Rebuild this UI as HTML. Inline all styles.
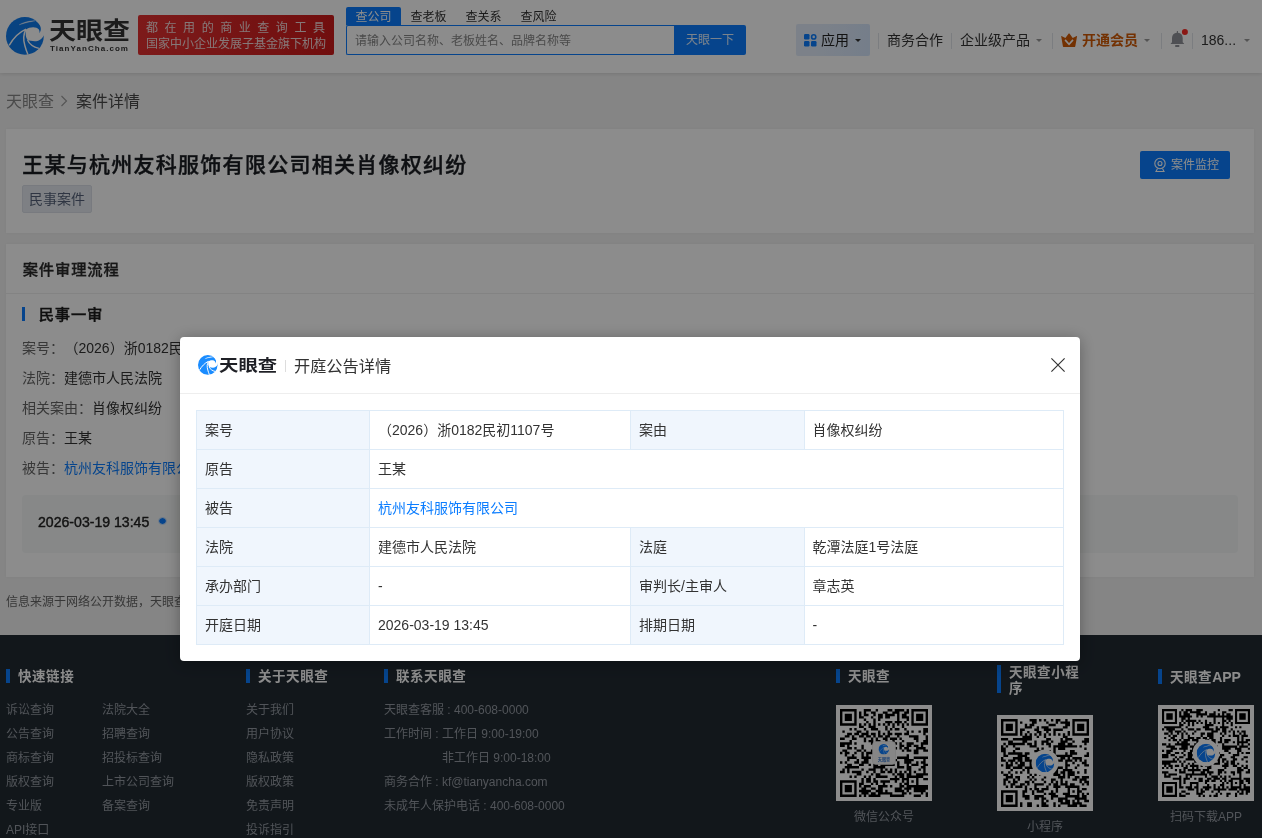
<!DOCTYPE html>
<html lang="zh-CN">
<head>
<meta charset="utf-8">
<title>案件详情 - 天眼查</title>
<style>
*{box-sizing:border-box;margin:0;padding:0}
html,body{width:1262px;height:838px;overflow:hidden}
body{font-family:"Liberation Sans","Noto Sans CJK SC",sans-serif;font-size:14px;color:#333;background:#f3f3f3;position:relative}
a{text-decoration:none;color:inherit}
.abs{position:absolute}
#pg{position:absolute;left:0;top:0;width:1262px;height:838px;overflow:hidden;will-change:transform}
/* header */
#hd{position:absolute;left:0;top:0;width:1262px;height:73px;background:#fff;box-shadow:0 1px 4px rgba(0,0,0,.12)}
#logo-ic{position:absolute;left:6.2px;top:17px;width:37.8px;height:37.8px}
#logo-t{position:absolute;left:49px;top:13px;font-size:24px;line-height:36px;font-weight:700;color:#333;letter-spacing:0;transform-origin:0 50%;transform:scaleX(1.125);white-space:nowrap}
#logo-s{position:absolute;left:50px;top:44px;font-size:8px;line-height:10px;font-weight:700;color:#333;letter-spacing:1.05px;white-space:nowrap}
#badge{position:absolute;left:138px;top:15px;width:196px;height:40px;background:linear-gradient(90deg,#e33131,#cd1b1b);border-radius:2px;color:#f3dada;font-size:12px;line-height:16px;padding:5px 0 0 8px;white-space:nowrap}
#badge .l1{letter-spacing:6.55px}
#badge .l2{letter-spacing:0}
#tabs{position:absolute;left:346px;top:7px;height:18px;font-size:12px;line-height:18px;color:#333;white-space:nowrap}
#tabs span{display:inline-block;height:18px;padding:1px 9.5px 0;line-height:18px;vertical-align:top}
#tabs span.on{background:#0b7dff;color:#fff;border-radius:2px 2px 0 0}
#sin{position:absolute;left:346px;top:25px;width:329px;height:30px;border:1px solid #0b7dff;border-right:0;border-radius:2px 0 0 2px;background:#fff;font-size:12px;line-height:30px;color:#888;padding-left:8px;white-space:nowrap}
#sbtn{position:absolute;left:674px;top:25px;width:72px;height:30px;background:#0b7dff;color:rgba(255,255,255,.88);font-size:12px;line-height:30px;text-align:center;border-radius:0 2px 2px 0}
.nav{position:absolute;top:24px;height:32px;line-height:32px;font-size:14px;color:#333;white-space:nowrap}
.caret{display:inline-block;width:0;height:0;border-left:3.5px solid transparent;border-right:3.5px solid transparent;border-top:3.5px solid #999;vertical-align:middle;margin-left:6px;position:relative;top:-1px}
.vsep{position:absolute;top:33px;width:1px;height:16px;background:#e1e4ea}
/* breadcrumb */
#bc{position:absolute;left:6px;top:90px;font-size:16px;line-height:24px;color:#888;white-space:nowrap}
#bc b{font-weight:400;color:#4a4a4a}
.card{position:absolute;left:6px;width:1248px;background:#fff;box-shadow:0 0 3px rgba(0,0,0,.06)}
#c1{top:129px;height:104px}
#c2{top:244px;height:333px}
#ttl{position:absolute;left:16.2px;top:20.4px;font-size:21px;letter-spacing:1.27px;line-height:32px;font-weight:500;-webkit-text-stroke:.4px #1a1d22;color:#1a1d22;white-space:nowrap}
#tag{position:absolute;left:16px;top:56px;width:70px;height:28px;background:#e6eaf0;border:1px solid #dadfe7;border-radius:2px;font-size:14px;line-height:26px;text-align:center;color:#56627a}
#mon{position:absolute;left:1134px;top:22px;width:90px;height:28px;background:#0b7dff;border-radius:2px;color:#fff;font-size:12px;line-height:28px;white-space:nowrap}
#mon svg{position:absolute;left:12px;top:6px}
#mon span{position:absolute;left:31px;top:0}
#c2 h3{position:absolute;left:16.7px;top:14px;font-size:15.3px;letter-spacing:.85px;line-height:24px;font-weight:500;-webkit-text-stroke:.3px #2a2a2a;color:#2a2a2a;white-space:nowrap}
#c2 .dv{position:absolute;left:0;top:49px;width:1248px;height:1px;background:#eee}
#c2 .bar{position:absolute;left:16px;top:63px;width:3px;height:14px;background:#0b7dff}
#c2 h4{position:absolute;left:32.7px;top:59px;font-size:15.3px;letter-spacing:.8px;line-height:24px;font-weight:500;-webkit-text-stroke:.4px #1c1c1c;color:#1c1c1c;white-space:nowrap}
.ln{position:absolute;left:16px;font-size:14px;line-height:22px;color:#666;white-space:nowrap}
.ln b{font-weight:400;color:#333}
.ln a{color:#0b7dff}
#tl{position:absolute;left:16px;top:251px;width:1216px;height:58px;background:#f6f8f7;border-radius:4px}
#tl span{position:absolute;left:16px;top:17px;font-size:14.1px;line-height:20px;color:#222;-webkit-text-stroke:.4px #222;white-space:nowrap}
#tl i{position:absolute;left:136px;top:21.5px;width:8.6px;height:8.6px;border-radius:50%;background:#0b7dff;border:1px solid #c4dcfa;background-clip:padding-box}
#src{position:absolute;left:6px;top:593px;font-size:12px;line-height:18px;color:#666;white-space:nowrap}
/* footer */
#ft{position:absolute;left:0;top:635px;width:1262px;height:203px;background:#212a32;color:#949aa2;font-size:12px}
#ft h5{position:absolute;font-size:13.5px;letter-spacing:.55px;line-height:14px;font-weight:700;color:#fff;white-space:nowrap;padding-left:12px}
#ft h5:before{content:"";position:absolute;left:0;top:-1px;width:4px;height:100%;background:#0b7dff}
#ft .c{position:absolute;line-height:24px;white-space:nowrap}
#ft .c div{height:24px}
.qr{position:absolute;width:96px;height:96px;background:#fff}
.qr svg{position:absolute;left:0;top:0}
.qrl{position:absolute;width:96px;text-align:center;font-size:12px;line-height:16px;color:#949aa2;white-space:nowrap}
#ft h5.two:before{top:0;height:28px}
#ft>*{margin-top:-1px}
/* mask + modal */
#mask{position:absolute;left:0;top:0;width:1262px;height:838px;background:rgba(0,0,0,.45)}
#md{position:absolute;left:180px;top:337px;width:900px;height:324px;background:#fff;border-radius:4px;box-shadow:0 2px 16px rgba(0,0,0,.32)}
#mh{position:absolute;left:0;top:0;width:900px;height:57px;border-bottom:1px solid #eee}
#mh .ic{position:absolute;left:18px;top:18px}
#mh .lt{position:absolute;left:38.8px;top:14.5px;font-size:15.5px;line-height:28px;font-weight:700;color:#1f2026;transform-origin:0 50%;transform:scaleX(1.25);white-space:nowrap}
#mh .sp{position:absolute;left:105px;top:23px;width:1px;height:12px;background:#ddd}
#mh .tt{position:absolute;left:114px;top:15px;font-size:16.2px;line-height:28px;color:#333;white-space:nowrap}
#mh .x{position:absolute;left:871px;top:21px}
#tb{position:absolute;left:16px;top:73px;width:867px;border-collapse:collapse;table-layout:fixed;font-size:14px;color:#333}
#tb td{height:39px;border:1px solid #deebf7;padding:0 8px;line-height:20px;white-space:nowrap;overflow:hidden}
#tb td.k{background:#f0f6fd}

#tb a{color:#0b7dff}
</style>
</head>
<body>
<div id="pg">
<div id="hd">
  <svg id="logo-ic" viewBox="0 0 100 100"><circle cx="50" cy="50" r="50" fill="#0f7aec"/><path d="M53,33 C62,26 80,24 87,33 C89,37 89,40 88,43 C93,37 94,28 88,20 C85,15 81,12 77,9 L101,5 L101,47 C96,58 86,64 76,64 C69,64 62,63 57,61 C52,54 51,44 53,33 Z" fill="#fff"/><path d="M8.5,75 C18,58 35,40 53,32 M53,32 C46,45 45,60 50,76 C52,84 55,92 58,99 M57,61 C62,72 74,80 87,83" stroke="#fff" stroke-width="3.8" fill="none"/><path d="M35,20.5 C48,13 62,10 77,10 C62,13 48,16.5 35,20.5 Z" fill="#fff" stroke="#fff" stroke-width=".8"/></svg>
  <div id="logo-t">天眼查</div>
  <div id="logo-s">TianYanCha.com</div>
  <div id="badge"><div class="l1">都在用的商业查询工具</div><div class="l2">国家中小企业发展子基金旗下机构</div></div>
  <div id="tabs"><span class="on">查公司</span><span>查老板</span><span>查关系</span><span>查风险</span></div>
  <div id="sin">请输入公司名称、老板姓名、品牌名称等</div>
  <div id="sbtn">天眼一下</div>
  <div class="abs" style="left:796px;top:24px;width:74px;height:32px;background:linear-gradient(100deg,#e2ecfa 30%,#d5e5fb);border-radius:2px"></div>
  <svg class="abs" style="left:804px;top:34px" width="13" height="13" viewBox="0 0 13 13"><rect x="0" y="0" width="5.5" height="5.5" rx="1.2" fill="#0b7dff"/><rect x="0" y="7" width="5.5" height="5.5" rx="1.2" fill="#0b7dff"/><rect x="7" y="7" width="5.5" height="5.5" rx="1.2" fill="#0b7dff"/><circle cx="9.7" cy="2.9" r="2.1" fill="none" stroke="#0b7dff" stroke-width="1.6"/></svg>
  <div class="nav" style="left:821px;color:#222">应用<span class="caret" style="border-top-color:#333"></span></div>
  <div class="vsep" style="left:878px"></div>
  <div class="nav" style="left:887px">商务合作</div>
  <div class="vsep" style="left:951px"></div>
  <div class="nav" style="left:960px">企业级产品<span class="caret"></span></div>
  <div class="vsep" style="left:1052px"></div>
  <svg class="abs" style="left:1060px;top:32px" width="19" height="17" viewBox="0 0 19 17"><path d="M1.2 4.3 C0.9 4.0 1.0 3.8 1.4 4.0 L5.4 5.9 L8.7 1.6 C8.95 1.3 9.2 1.3 9.45 1.6 L12.7 5.9 L16.7 4.0 C17.1 3.8 17.2 4.0 17.0 4.4 L15.3 14.2 C15.2 14.8 14.8 15.1 14.2 15.1 L4.0 15.1 C3.4 15.1 3.0 14.8 2.9 14.2 Z" fill="#d25a05"/><path d="M5.1 7.9 L9.05 12.4 L13 7.9" stroke="#fff" stroke-width="1.6" fill="none"/></svg>
  <div class="nav" style="left:1082px;color:#d25a05;font-weight:700">开通会员<span class="caret"></span></div>
  <div class="vsep" style="left:1161px"></div>
  <svg class="abs" style="left:1169px;top:28px" width="20" height="22" viewBox="0 0 20 22"><path d="M7.8 3.4 C7.8 2.9 9.0 2.9 9.0 3.4 L9.0 4.75 C11.8 5.0 13.7 6.9 13.7 10 L13.7 14.3 L15.0 15.5 C15.3 15.8 15.2 16.1 14.8 16.1 L2.0 16.1 C1.6 16.1 1.5 15.8 1.8 15.5 L3.0 14.3 L3.0 10 C3.0 6.9 5.0 5.0 7.8 4.75 Z" fill="#909399"/><rect x="6.2" y="17.1" width="4.1" height="1.8" rx=".5" fill="#909399"/><circle cx="15.9" cy="4" r="3" fill="#fb2b25"/></svg>
  <div class="vsep" style="left:1192px"></div>
  <div class="nav" style="left:1201px">186...<span class="caret" style="margin-left:8px"></span></div>
</div>

<div id="bc">天眼查 <svg width="8" height="12" viewBox="0 0 8 12" style="margin:0 3px 0 2px"><path d="M1.5 1 L6.5 6 L1.5 11" stroke="#999" stroke-width="1.1" fill="none"/></svg> <b>案件详情</b></div>

<div class="card" id="c1">
  <div id="ttl">王某与杭州友科服饰有限公司相关肖像权纠纷</div>
  <div id="tag">民事案件</div>
  <div id="mon"><svg width="16" height="16" viewBox="0 0 16 16" fill="none" stroke="#fff" stroke-width="1.1"><circle cx="8" cy="6.5" r="5.2"/><circle cx="8" cy="6.5" r="2"/><path d="M5.5 11.5 L4 14.5 L12 14.5 L10.5 11.5"/></svg><span>案件监控</span></div>
</div>

<div class="card" id="c2">
  <h3>案件审理流程</h3>
  <div class="dv"></div>
  <div class="bar"></div>
  <h4>民事一审</h4>
  <div class="ln" style="top:93px">案号：<b style="margin-left:7.5px">（2026）浙0182民初1107号</b></div>
  <div class="ln" style="top:123px">法院：<b>建德市人民法院</b></div>
  <div class="ln" style="top:153px">相关案由：<b>肖像权纠纷</b></div>
  <div class="ln" style="top:183px">原告：<b>王某</b></div>
  <div class="ln" style="top:213px">被告：<a>杭州友科服饰有限公司</a></div>
  <div id="tl"><span>2026-03-19 13:45</span><i></i></div>
</div>
<div id="src">信息来源于网络公开数据，天眼查仅作展示，不代表天眼查观点。</div>

<div id="ft">
  <h5 style="left:6px;top:36px">快速链接</h5>
  <div class="c" style="left:6px;top:64px"><div>诉讼查询</div><div>公告查询</div><div>商标查询</div><div>版权查询</div><div>专业版</div><div>API接口</div></div>
  <div class="c" style="left:102px;top:64px"><div>法院大全</div><div>招聘查询</div><div>招投标查询</div><div>上市公司查询</div><div>备案查询</div></div>
  <h5 style="left:246px;top:36px">关于天眼查</h5>
  <div class="c" style="left:246px;top:64px"><div>关于我们</div><div>用户协议</div><div>隐私政策</div><div>版权政策</div><div>免责声明</div><div>投诉指引</div></div>
  <h5 style="left:384px;top:36px">联系天眼查</h5>
  <div class="c" style="left:384px;top:64px"><div>天眼查客服 : 400-608-0000</div><div>工作时间 : 工作日 9:00-19:00</div><div style="padding-left:58px">非工作日 9:00-18:00</div><div>商务合作 : kf@tianyancha.com</div><div>未成年人保护电话 : 400-608-0000</div></div>
  <h5 style="left:836px;top:36px">天眼查</h5>
  <h5 class="two" style="left:997px;top:31px;width:92px;white-space:normal;line-height:16px">天眼查小程序</h5>
  <h5 style="left:1158px;top:36px">天眼查<span style="font-size:14px;letter-spacing:0">APP</span></h5>
  <div class="qr" style="left:836px;top:71px"><svg width="96" height="96" viewBox="0 0 96 96"><g transform="translate(4 4) scale(2.3784)"><path d="M0 0h7v1h-7zM10 0h3v1h-3zM15 0h1v1h-1zM20 0h2v1h-2zM23 0h4v1h-4zM28 0h1v1h-1zM30 0h7v1h-7zM0 1h1v1h-1zM6 1h1v1h-1zM8 1h1v1h-1zM10 1h1v1h-1zM13 1h2v1h-2zM18 1h2v1h-2zM22 1h3v1h-3zM27 1h2v1h-2zM30 1h1v1h-1zM36 1h1v1h-1zM0 2h1v1h-1zM2 2h3v1h-3zM6 2h1v1h-1zM8 2h1v1h-1zM10 2h2v1h-2zM14 2h1v1h-1zM16 2h2v1h-2zM19 2h4v1h-4zM24 2h1v1h-1zM26 2h2v1h-2zM30 2h1v1h-1zM32 2h3v1h-3zM36 2h1v1h-1zM0 3h1v1h-1zM2 3h3v1h-3zM6 3h1v1h-1zM8 3h2v1h-2zM13 3h1v1h-1zM16 3h2v1h-2zM19 3h2v1h-2zM24 3h1v1h-1zM26 3h3v1h-3zM30 3h1v1h-1zM32 3h3v1h-3zM36 3h1v1h-1zM0 4h1v1h-1zM2 4h3v1h-3zM6 4h1v1h-1zM10 4h1v1h-1zM14 4h1v1h-1zM16 4h1v1h-1zM24 4h1v1h-1zM28 4h1v1h-1zM30 4h1v1h-1zM32 4h3v1h-3zM36 4h1v1h-1zM0 5h1v1h-1zM6 5h1v1h-1zM11 5h1v1h-1zM14 5h1v1h-1zM19 5h3v1h-3zM23 5h3v1h-3zM27 5h1v1h-1zM30 5h1v1h-1zM36 5h1v1h-1zM0 6h7v1h-7zM8 6h1v1h-1zM10 6h1v1h-1zM12 6h1v1h-1zM14 6h1v1h-1zM16 6h1v1h-1zM18 6h1v1h-1zM20 6h1v1h-1zM22 6h1v1h-1zM24 6h1v1h-1zM26 6h1v1h-1zM28 6h1v1h-1zM30 6h7v1h-7zM8 7h2v1h-2zM12 7h3v1h-3zM19 7h1v1h-1zM22 7h1v1h-1zM26 7h1v1h-1zM4 8h1v1h-1zM6 8h1v1h-1zM10 8h1v1h-1zM13 8h3v1h-3zM19 8h1v1h-1zM21 8h1v1h-1zM23 8h2v1h-2zM27 8h1v1h-1zM35 8h2v1h-2zM1 9h1v1h-1zM7 9h2v1h-2zM11 9h1v1h-1zM16 9h1v1h-1zM20 9h1v1h-1zM28 9h1v1h-1zM30 9h1v1h-1zM33 9h1v1h-1zM35 9h2v1h-2zM3 10h2v1h-2zM6 10h2v1h-2zM9 10h3v1h-3zM13 10h2v1h-2zM16 10h1v1h-1zM18 10h1v1h-1zM20 10h2v1h-2zM23 10h3v1h-3zM27 10h2v1h-2zM35 10h1v1h-1zM2 11h2v1h-2zM5 11h1v1h-1zM8 11h2v1h-2zM11 11h2v1h-2zM14 11h1v1h-1zM16 11h2v1h-2zM19 11h2v1h-2zM24 11h1v1h-1zM29 11h4v1h-4zM36 11h1v1h-1zM0 12h2v1h-2zM5 12h2v1h-2zM10 12h1v1h-1zM13 12h1v1h-1zM15 12h1v1h-1zM18 12h2v1h-2zM21 12h3v1h-3zM25 12h1v1h-1zM31 12h2v1h-2zM36 12h1v1h-1zM4 13h1v1h-1zM10 13h1v1h-1zM12 13h2v1h-2zM15 13h2v1h-2zM19 13h1v1h-1zM22 13h1v1h-1zM26 13h1v1h-1zM32 13h1v1h-1zM35 13h2v1h-2zM0 14h5v1h-5zM6 14h1v1h-1zM13 14h1v1h-1zM16 14h1v1h-1zM18 14h1v1h-1zM20 14h1v1h-1zM23 14h1v1h-1zM25 14h1v1h-1zM28 14h3v1h-3zM34 14h3v1h-3zM0 15h2v1h-2zM3 15h1v1h-1zM9 15h1v1h-1zM14 15h1v1h-1zM22 15h1v1h-1zM25 15h2v1h-2zM28 15h2v1h-2zM31 15h2v1h-2zM34 15h1v1h-1zM3 16h2v1h-2zM6 16h1v1h-1zM9 16h1v1h-1zM15 16h3v1h-3zM20 16h4v1h-4zM25 16h1v1h-1zM27 16h2v1h-2zM32 16h4v1h-4zM1 17h2v1h-2zM7 17h2v1h-2zM10 17h1v1h-1zM13 17h1v1h-1zM17 17h3v1h-3zM21 17h2v1h-2zM26 17h1v1h-1zM28 17h2v1h-2zM31 17h2v1h-2zM35 17h2v1h-2zM0 18h1v1h-1zM2 18h2v1h-2zM6 18h1v1h-1zM9 18h1v1h-1zM11 18h3v1h-3zM16 18h7v1h-7zM31 18h2v1h-2zM2 19h1v1h-1zM5 19h1v1h-1zM9 19h1v1h-1zM11 19h1v1h-1zM14 19h2v1h-2zM19 19h3v1h-3zM28 19h1v1h-1zM3 20h4v1h-4zM9 20h4v1h-4zM14 20h3v1h-3zM19 20h3v1h-3zM24 20h5v1h-5zM31 20h6v1h-6zM3 21h1v1h-1zM7 21h1v1h-1zM10 21h2v1h-2zM14 21h1v1h-1zM20 21h2v1h-2zM23 21h1v1h-1zM27 21h4v1h-4zM35 21h1v1h-1zM0 22h1v1h-1zM2 22h1v1h-1zM6 22h2v1h-2zM9 22h3v1h-3zM15 22h1v1h-1zM17 22h3v1h-3zM21 22h1v1h-1zM24 22h1v1h-1zM27 22h3v1h-3zM32 22h1v1h-1zM34 22h2v1h-2zM3 23h2v1h-2zM8 23h2v1h-2zM12 23h1v1h-1zM14 23h2v1h-2zM17 23h6v1h-6zM24 23h1v1h-1zM28 23h1v1h-1zM30 23h3v1h-3zM35 23h2v1h-2zM2 24h6v1h-6zM14 24h5v1h-5zM24 24h3v1h-3zM28 24h2v1h-2zM34 24h2v1h-2zM1 25h1v1h-1zM3 25h1v1h-1zM9 25h1v1h-1zM12 25h3v1h-3zM17 25h1v1h-1zM19 25h1v1h-1zM21 25h1v1h-1zM23 25h1v1h-1zM28 25h2v1h-2zM33 25h1v1h-1zM35 25h1v1h-1zM0 26h2v1h-2zM3 26h1v1h-1zM5 26h4v1h-4zM11 26h1v1h-1zM14 26h1v1h-1zM17 26h2v1h-2zM20 26h2v1h-2zM23 26h1v1h-1zM25 26h1v1h-1zM27 26h1v1h-1zM29 26h1v1h-1zM31 26h1v1h-1zM35 26h1v1h-1zM7 27h2v1h-2zM13 27h1v1h-1zM15 27h2v1h-2zM22 27h1v1h-1zM24 27h3v1h-3zM28 27h2v1h-2zM32 27h5v1h-5zM4 28h1v1h-1zM6 28h1v1h-1zM10 28h1v1h-1zM12 28h1v1h-1zM15 28h5v1h-5zM23 28h1v1h-1zM25 28h2v1h-2zM28 28h7v1h-7zM9 29h1v1h-1zM11 29h2v1h-2zM14 29h1v1h-1zM21 29h4v1h-4zM26 29h3v1h-3zM32 29h1v1h-1zM35 29h2v1h-2zM0 30h7v1h-7zM9 30h1v1h-1zM11 30h2v1h-2zM14 30h2v1h-2zM17 30h4v1h-4zM23 30h1v1h-1zM26 30h1v1h-1zM28 30h1v1h-1zM30 30h1v1h-1zM32 30h1v1h-1zM0 31h1v1h-1zM6 31h1v1h-1zM8 31h2v1h-2zM13 31h1v1h-1zM15 31h1v1h-1zM18 31h1v1h-1zM25 31h1v1h-1zM27 31h2v1h-2zM32 31h1v1h-1zM0 32h1v1h-1zM2 32h3v1h-3zM6 32h1v1h-1zM8 32h1v1h-1zM10 32h3v1h-3zM16 32h4v1h-4zM21 32h1v1h-1zM25 32h2v1h-2zM28 32h9v1h-9zM0 33h1v1h-1zM2 33h3v1h-3zM6 33h1v1h-1zM9 33h2v1h-2zM13 33h2v1h-2zM16 33h2v1h-2zM23 33h3v1h-3zM27 33h3v1h-3zM31 33h6v1h-6zM0 34h1v1h-1zM2 34h3v1h-3zM6 34h1v1h-1zM8 34h5v1h-5zM15 34h3v1h-3zM19 34h1v1h-1zM23 34h4v1h-4zM28 34h1v1h-1zM31 34h5v1h-5zM0 35h1v1h-1zM6 35h1v1h-1zM9 35h3v1h-3zM13 35h2v1h-2zM16 35h6v1h-6zM26 35h2v1h-2zM29 35h1v1h-1zM34 35h1v1h-1zM36 35h1v1h-1zM0 36h7v1h-7zM8 36h1v1h-1zM10 36h1v1h-1zM12 36h5v1h-5zM21 36h6v1h-6zM31 36h3v1h-3zM36 36h1v1h-1z" fill="#000"/></g><rect x="36.5" y="36.5" width="23" height="23" rx="3.5" fill="#f4f4f4" stroke="#ddd" stroke-width=".6"/><svg x="42.5" y="39" width="10.5" height="10.5" viewBox="0 0 100 100"><circle cx="50" cy="50" r="50" fill="#0b7dff"/><path d="M53,33 C62,26 80,24 87,33 C89,37 89,40 88,43 C93,37 94,28 88,20 C85,15 81,12 77,9 L101,5 L101,47 C96,58 86,64 76,64 C69,64 62,63 57,61 C52,54 51,44 53,33 Z" fill="#fff"/><path d="M8.5,75 C18,58 35,40 53,32 M53,32 C46,45 45,60 50,76 C52,84 55,92 58,99 M57,61 C62,72 74,80 87,83" stroke="#fff" stroke-width="3.2" fill="none"/><path d="M35,19.5 C48,12 62,9 77,9.5 C62,11.5 48,14.5 35,19.5 Z" fill="#fff" stroke="#fff" stroke-width=".8"/></svg><text x="48" y="55.6" font-size="4.2" font-weight="700" text-anchor="middle" fill="#3a7bd0" font-family="'Liberation Sans','Noto Sans CJK SC',sans-serif">天眼查</text></svg></div>
  <div class="qr" style="left:997px;top:81px"><svg width="96" height="96" viewBox="0 0 96 96"><g transform="translate(4 4) scale(2.3784)"><path d="M0 0h7v1h-7zM12 0h3v1h-3zM16 0h1v1h-1zM18 0h1v1h-1zM21 0h1v1h-1zM23 0h2v1h-2zM27 0h1v1h-1zM30 0h7v1h-7zM0 1h1v1h-1zM6 1h1v1h-1zM8 1h1v1h-1zM13 1h2v1h-2zM19 1h1v1h-1zM23 1h1v1h-1zM25 1h4v1h-4zM30 1h1v1h-1zM36 1h1v1h-1zM0 2h1v1h-1zM2 2h3v1h-3zM6 2h1v1h-1zM10 2h1v1h-1zM12 2h2v1h-2zM20 2h3v1h-3zM27 2h2v1h-2zM30 2h1v1h-1zM32 2h3v1h-3zM36 2h1v1h-1zM0 3h1v1h-1zM2 3h3v1h-3zM6 3h1v1h-1zM10 3h3v1h-3zM15 3h1v1h-1zM17 3h3v1h-3zM26 3h2v1h-2zM30 3h1v1h-1zM32 3h3v1h-3zM36 3h1v1h-1zM0 4h1v1h-1zM2 4h3v1h-3zM6 4h1v1h-1zM8 4h2v1h-2zM14 4h2v1h-2zM18 4h3v1h-3zM22 4h4v1h-4zM30 4h1v1h-1zM32 4h3v1h-3zM36 4h1v1h-1zM0 5h1v1h-1zM6 5h1v1h-1zM8 5h1v1h-1zM11 5h1v1h-1zM15 5h2v1h-2zM19 5h1v1h-1zM22 5h1v1h-1zM28 5h1v1h-1zM30 5h1v1h-1zM36 5h1v1h-1zM0 6h7v1h-7zM8 6h1v1h-1zM10 6h1v1h-1zM12 6h1v1h-1zM14 6h1v1h-1zM16 6h1v1h-1zM18 6h1v1h-1zM20 6h1v1h-1zM22 6h1v1h-1zM24 6h1v1h-1zM26 6h1v1h-1zM28 6h1v1h-1zM30 6h7v1h-7zM9 7h4v1h-4zM15 7h1v1h-1zM18 7h1v1h-1zM26 7h2v1h-2zM0 8h3v1h-3zM5 8h8v1h-8zM19 8h2v1h-2zM25 8h1v1h-1zM27 8h3v1h-3zM35 8h2v1h-2zM3 9h2v1h-2zM9 9h2v1h-2zM14 9h1v1h-1zM17 9h3v1h-3zM21 9h1v1h-1zM25 9h3v1h-3zM30 9h1v1h-1zM34 9h3v1h-3zM1 10h1v1h-1zM3 10h7v1h-7zM11 10h2v1h-2zM14 10h1v1h-1zM17 10h1v1h-1zM19 10h2v1h-2zM24 10h3v1h-3zM28 10h2v1h-2zM35 10h1v1h-1zM0 11h1v1h-1zM2 11h1v1h-1zM5 11h1v1h-1zM12 11h3v1h-3zM20 11h1v1h-1zM22 11h10v1h-10zM33 11h1v1h-1zM0 12h2v1h-2zM6 12h2v1h-2zM15 12h1v1h-1zM17 12h1v1h-1zM22 12h1v1h-1zM24 12h3v1h-3zM35 12h1v1h-1zM0 13h2v1h-2zM5 13h1v1h-1zM14 13h5v1h-5zM20 13h1v1h-1zM22 13h1v1h-1zM29 13h2v1h-2zM1 14h1v1h-1zM3 14h6v1h-6zM10 14h2v1h-2zM17 14h1v1h-1zM19 14h1v1h-1zM21 14h2v1h-2zM27 14h1v1h-1zM29 14h3v1h-3zM36 14h1v1h-1zM1 15h2v1h-2zM7 15h4v1h-4zM23 15h7v1h-7zM35 15h2v1h-2zM0 16h1v1h-1zM5 16h4v1h-4zM10 16h2v1h-2zM15 16h2v1h-2zM21 16h1v1h-1zM25 16h2v1h-2zM28 16h1v1h-1zM30 16h4v1h-4zM0 17h2v1h-2zM3 17h3v1h-3zM7 17h2v1h-2zM10 17h6v1h-6zM19 17h3v1h-3zM24 17h2v1h-2zM27 17h3v1h-3zM31 17h1v1h-1zM33 17h1v1h-1zM35 17h1v1h-1zM2 18h1v1h-1zM4 18h1v1h-1zM6 18h1v1h-1zM8 18h2v1h-2zM12 18h1v1h-1zM15 18h4v1h-4zM23 18h1v1h-1zM27 18h1v1h-1zM30 18h1v1h-1zM34 18h2v1h-2zM0 19h1v1h-1zM2 19h3v1h-3zM7 19h3v1h-3zM12 19h10v1h-10zM27 19h2v1h-2zM32 19h1v1h-1zM35 19h2v1h-2zM2 20h2v1h-2zM5 20h4v1h-4zM10 20h6v1h-6zM17 20h1v1h-1zM22 20h4v1h-4zM27 20h1v1h-1zM31 20h1v1h-1zM4 21h1v1h-1zM9 21h1v1h-1zM11 21h1v1h-1zM15 21h3v1h-3zM19 21h1v1h-1zM22 21h2v1h-2zM26 21h4v1h-4zM35 21h1v1h-1zM0 22h1v1h-1zM3 22h1v1h-1zM6 22h1v1h-1zM8 22h1v1h-1zM11 22h1v1h-1zM17 22h4v1h-4zM22 22h2v1h-2zM25 22h2v1h-2zM28 22h3v1h-3zM32 22h1v1h-1zM35 22h1v1h-1zM1 23h2v1h-2zM4 23h1v1h-1zM12 23h1v1h-1zM14 23h1v1h-1zM16 23h3v1h-3zM22 23h3v1h-3zM26 23h1v1h-1zM28 23h3v1h-3zM2 24h3v1h-3zM6 24h2v1h-2zM11 24h1v1h-1zM13 24h1v1h-1zM18 24h1v1h-1zM24 24h3v1h-3zM28 24h1v1h-1zM31 24h2v1h-2zM34 24h3v1h-3zM1 25h2v1h-2zM5 25h1v1h-1zM7 25h1v1h-1zM12 25h1v1h-1zM14 25h1v1h-1zM17 25h1v1h-1zM21 25h2v1h-2zM25 25h1v1h-1zM30 25h2v1h-2zM33 25h3v1h-3zM1 26h1v1h-1zM3 26h1v1h-1zM5 26h2v1h-2zM10 26h2v1h-2zM13 26h1v1h-1zM18 26h1v1h-1zM21 26h1v1h-1zM23 26h1v1h-1zM25 26h1v1h-1zM27 26h1v1h-1zM33 26h1v1h-1zM35 26h2v1h-2zM1 27h1v1h-1zM4 27h2v1h-2zM8 27h2v1h-2zM11 27h1v1h-1zM14 27h4v1h-4zM20 27h1v1h-1zM22 27h2v1h-2zM25 27h3v1h-3zM29 27h2v1h-2zM34 27h1v1h-1zM36 27h1v1h-1zM2 28h1v1h-1zM4 28h1v1h-1zM6 28h3v1h-3zM10 28h1v1h-1zM14 28h1v1h-1zM19 28h1v1h-1zM22 28h3v1h-3zM27 28h6v1h-6zM10 29h1v1h-1zM12 29h1v1h-1zM14 29h2v1h-2zM17 29h3v1h-3zM23 29h1v1h-1zM28 29h1v1h-1zM32 29h1v1h-1zM34 29h2v1h-2zM0 30h7v1h-7zM9 30h2v1h-2zM13 30h1v1h-1zM15 30h3v1h-3zM21 30h1v1h-1zM23 30h1v1h-1zM28 30h1v1h-1zM30 30h1v1h-1zM32 30h2v1h-2zM0 31h1v1h-1zM6 31h1v1h-1zM9 31h1v1h-1zM13 31h1v1h-1zM18 31h1v1h-1zM20 31h3v1h-3zM26 31h3v1h-3zM32 31h1v1h-1zM34 31h1v1h-1zM36 31h1v1h-1zM0 32h1v1h-1zM2 32h3v1h-3zM6 32h1v1h-1zM9 32h3v1h-3zM14 32h4v1h-4zM21 32h3v1h-3zM27 32h6v1h-6zM34 32h2v1h-2zM0 33h1v1h-1zM2 33h3v1h-3zM6 33h1v1h-1zM10 33h2v1h-2zM14 33h2v1h-2zM17 33h2v1h-2zM21 33h1v1h-1zM24 33h4v1h-4zM31 33h5v1h-5zM0 34h1v1h-1zM2 34h3v1h-3zM6 34h1v1h-1zM17 34h1v1h-1zM19 34h1v1h-1zM24 34h2v1h-2zM27 34h2v1h-2zM30 34h1v1h-1zM32 34h1v1h-1zM35 34h2v1h-2zM0 35h1v1h-1zM6 35h1v1h-1zM8 35h1v1h-1zM11 35h2v1h-2zM17 35h2v1h-2zM22 35h1v1h-1zM25 35h4v1h-4zM30 35h4v1h-4zM0 36h7v1h-7zM8 36h1v1h-1zM11 36h2v1h-2zM15 36h1v1h-1zM17 36h3v1h-3zM22 36h1v1h-1zM24 36h1v1h-1zM28 36h4v1h-4zM33 36h3v1h-3z" fill="#000"/></g><circle cx="48" cy="48" r="13.5" fill="#fff"/><svg x="38.7" y="38.7" width="18.6" height="18.6" viewBox="0 0 100 100"><circle cx="50" cy="50" r="50" fill="#0b7dff"/><path d="M53,33 C62,26 80,24 87,33 C89,37 89,40 88,43 C93,37 94,28 88,20 C85,15 81,12 77,9 L101,5 L101,47 C96,58 86,64 76,64 C69,64 62,63 57,61 C52,54 51,44 53,33 Z" fill="#fff"/><path d="M8.5,75 C18,58 35,40 53,32 M53,32 C46,45 45,60 50,76 C52,84 55,92 58,99 M57,61 C62,72 74,80 87,83" stroke="#fff" stroke-width="3.2" fill="none"/><path d="M35,19.5 C48,12 62,9 77,9.5 C62,11.5 48,14.5 35,19.5 Z" fill="#fff" stroke="#fff" stroke-width=".8"/></svg></svg></div>
  <div class="qr" style="left:1158px;top:71px"><svg width="96" height="96" viewBox="0 0 96 96"><g transform="translate(4 4) scale(2.1463)"><path d="M0 0h7v1h-7zM9 0h1v1h-1zM11 0h3v1h-3zM16 0h3v1h-3zM26 0h1v1h-1zM31 0h2v1h-2zM34 0h7v1h-7zM0 1h1v1h-1zM6 1h1v1h-1zM8 1h1v1h-1zM10 1h2v1h-2zM13 1h5v1h-5zM20 1h1v1h-1zM24 1h1v1h-1zM28 1h2v1h-2zM34 1h1v1h-1zM40 1h1v1h-1zM0 2h1v1h-1zM2 2h3v1h-3zM6 2h1v1h-1zM8 2h1v1h-1zM10 2h3v1h-3zM16 2h5v1h-5zM22 2h3v1h-3zM26 2h1v1h-1zM28 2h1v1h-1zM30 2h2v1h-2zM34 2h1v1h-1zM36 2h3v1h-3zM40 2h1v1h-1zM0 3h1v1h-1zM2 3h3v1h-3zM6 3h1v1h-1zM8 3h6v1h-6zM16 3h1v1h-1zM18 3h1v1h-1zM21 3h12v1h-12zM34 3h1v1h-1zM36 3h3v1h-3zM40 3h1v1h-1zM0 4h1v1h-1zM2 4h3v1h-3zM6 4h1v1h-1zM9 4h2v1h-2zM12 4h1v1h-1zM24 4h1v1h-1zM28 4h1v1h-1zM30 4h3v1h-3zM34 4h1v1h-1zM36 4h3v1h-3zM40 4h1v1h-1zM0 5h1v1h-1zM6 5h1v1h-1zM9 5h1v1h-1zM11 5h5v1h-5zM17 5h1v1h-1zM20 5h1v1h-1zM24 5h1v1h-1zM28 5h2v1h-2zM31 5h1v1h-1zM34 5h1v1h-1zM40 5h1v1h-1zM0 6h7v1h-7zM8 6h1v1h-1zM10 6h1v1h-1zM12 6h1v1h-1zM14 6h1v1h-1zM16 6h1v1h-1zM18 6h1v1h-1zM20 6h1v1h-1zM22 6h1v1h-1zM24 6h1v1h-1zM26 6h1v1h-1zM28 6h1v1h-1zM30 6h1v1h-1zM32 6h1v1h-1zM34 6h7v1h-7zM8 7h2v1h-2zM12 7h1v1h-1zM14 7h1v1h-1zM20 7h4v1h-4zM28 7h1v1h-1zM32 7h1v1h-1zM1 8h8v1h-8zM11 8h1v1h-1zM19 8h3v1h-3zM25 8h1v1h-1zM27 8h4v1h-4zM34 8h1v1h-1zM36 8h1v1h-1zM0 9h1v1h-1zM2 9h4v1h-4zM9 9h1v1h-1zM12 9h3v1h-3zM16 9h2v1h-2zM20 9h4v1h-4zM25 9h2v1h-2zM28 9h2v1h-2zM32 9h1v1h-1zM3 10h2v1h-2zM6 10h3v1h-3zM10 10h1v1h-1zM15 10h1v1h-1zM23 10h3v1h-3zM28 10h2v1h-2zM31 10h1v1h-1zM33 10h1v1h-1zM35 10h1v1h-1zM37 10h2v1h-2zM1 11h2v1h-2zM4 11h1v1h-1zM7 11h1v1h-1zM9 11h1v1h-1zM11 11h1v1h-1zM14 11h1v1h-1zM18 11h2v1h-2zM21 11h3v1h-3zM27 11h1v1h-1zM29 11h1v1h-1zM33 11h1v1h-1zM36 11h1v1h-1zM38 11h1v1h-1zM3 12h1v1h-1zM5 12h2v1h-2zM9 12h1v1h-1zM12 12h1v1h-1zM18 12h1v1h-1zM21 12h3v1h-3zM28 12h1v1h-1zM31 12h1v1h-1zM33 12h3v1h-3zM37 12h3v1h-3zM1 13h1v1h-1zM4 13h2v1h-2zM9 13h1v1h-1zM12 13h3v1h-3zM16 13h2v1h-2zM19 13h2v1h-2zM22 13h2v1h-2zM27 13h1v1h-1zM35 13h1v1h-1zM37 13h1v1h-1zM3 14h1v1h-1zM5 14h2v1h-2zM8 14h1v1h-1zM10 14h3v1h-3zM14 14h3v1h-3zM20 14h2v1h-2zM23 14h2v1h-2zM27 14h1v1h-1zM29 14h3v1h-3zM35 14h1v1h-1zM37 14h1v1h-1zM39 14h2v1h-2zM7 15h1v1h-1zM9 15h3v1h-3zM16 15h1v1h-1zM18 15h2v1h-2zM21 15h1v1h-1zM23 15h2v1h-2zM26 15h2v1h-2zM29 15h2v1h-2zM33 15h1v1h-1zM35 15h5v1h-5zM0 16h2v1h-2zM3 16h1v1h-1zM6 16h7v1h-7zM15 16h2v1h-2zM18 16h1v1h-1zM22 16h1v1h-1zM24 16h1v1h-1zM28 16h1v1h-1zM35 16h1v1h-1zM37 16h1v1h-1zM40 16h1v1h-1zM2 17h4v1h-4zM9 17h3v1h-3zM13 17h6v1h-6zM21 17h2v1h-2zM24 17h2v1h-2zM28 17h7v1h-7zM36 17h4v1h-4zM4 18h3v1h-3zM8 18h4v1h-4zM14 18h1v1h-1zM21 18h2v1h-2zM28 18h4v1h-4zM34 18h3v1h-3zM40 18h1v1h-1zM0 19h1v1h-1zM2 19h3v1h-3zM10 19h1v1h-1zM13 19h2v1h-2zM16 19h2v1h-2zM19 19h1v1h-1zM21 19h2v1h-2zM24 19h2v1h-2zM29 19h2v1h-2zM35 19h2v1h-2zM2 20h2v1h-2zM6 20h2v1h-2zM9 20h1v1h-1zM12 20h2v1h-2zM15 20h4v1h-4zM20 20h1v1h-1zM25 20h2v1h-2zM31 20h1v1h-1zM35 20h1v1h-1zM37 20h1v1h-1zM39 20h2v1h-2zM0 21h3v1h-3zM4 21h2v1h-2zM10 21h1v1h-1zM12 21h5v1h-5zM22 21h2v1h-2zM27 21h2v1h-2zM33 21h3v1h-3zM0 22h3v1h-3zM6 22h1v1h-1zM8 22h2v1h-2zM12 22h2v1h-2zM15 22h4v1h-4zM25 22h3v1h-3zM32 22h2v1h-2zM38 22h2v1h-2zM5 23h1v1h-1zM7 23h1v1h-1zM11 23h8v1h-8zM20 23h1v1h-1zM24 23h3v1h-3zM28 23h2v1h-2zM33 23h2v1h-2zM37 23h1v1h-1zM0 24h7v1h-7zM8 24h1v1h-1zM10 24h1v1h-1zM15 24h4v1h-4zM20 24h1v1h-1zM26 24h1v1h-1zM28 24h1v1h-1zM30 24h1v1h-1zM32 24h2v1h-2zM39 24h1v1h-1zM0 25h4v1h-4zM9 25h1v1h-1zM12 25h1v1h-1zM14 25h1v1h-1zM19 25h1v1h-1zM22 25h1v1h-1zM24 25h3v1h-3zM29 25h2v1h-2zM32 25h2v1h-2zM35 25h1v1h-1zM1 26h1v1h-1zM3 26h2v1h-2zM6 26h2v1h-2zM9 26h1v1h-1zM11 26h1v1h-1zM13 26h4v1h-4zM18 26h1v1h-1zM20 26h3v1h-3zM28 26h3v1h-3zM33 26h2v1h-2zM37 26h1v1h-1zM39 26h1v1h-1zM0 27h1v1h-1zM2 27h1v1h-1zM4 27h1v1h-1zM10 27h2v1h-2zM14 27h1v1h-1zM16 27h1v1h-1zM21 27h2v1h-2zM29 27h1v1h-1zM35 27h2v1h-2zM38 27h2v1h-2zM6 28h1v1h-1zM8 28h1v1h-1zM10 28h1v1h-1zM12 28h6v1h-6zM19 28h3v1h-3zM26 28h3v1h-3zM35 28h3v1h-3zM40 28h1v1h-1zM0 29h3v1h-3zM8 29h3v1h-3zM14 29h1v1h-1zM18 29h2v1h-2zM21 29h3v1h-3zM26 29h2v1h-2zM29 29h1v1h-1zM32 29h2v1h-2zM35 29h2v1h-2zM39 29h2v1h-2zM1 30h1v1h-1zM3 30h4v1h-4zM11 30h10v1h-10zM22 30h1v1h-1zM26 30h1v1h-1zM33 30h1v1h-1zM36 30h1v1h-1zM1 31h3v1h-3zM8 31h1v1h-1zM11 31h1v1h-1zM13 31h1v1h-1zM20 31h1v1h-1zM23 31h3v1h-3zM27 31h1v1h-1zM29 31h1v1h-1zM31 31h1v1h-1zM36 31h1v1h-1zM5 32h4v1h-4zM10 32h3v1h-3zM15 32h1v1h-1zM17 32h2v1h-2zM21 32h2v1h-2zM24 32h3v1h-3zM28 32h2v1h-2zM32 32h5v1h-5zM38 32h3v1h-3zM8 33h1v1h-1zM10 33h1v1h-1zM17 33h2v1h-2zM20 33h2v1h-2zM23 33h2v1h-2zM27 33h1v1h-1zM29 33h1v1h-1zM31 33h2v1h-2zM36 33h2v1h-2zM39 33h2v1h-2zM0 34h7v1h-7zM8 34h1v1h-1zM10 34h1v1h-1zM13 34h4v1h-4zM20 34h1v1h-1zM28 34h1v1h-1zM30 34h1v1h-1zM32 34h1v1h-1zM34 34h1v1h-1zM36 34h2v1h-2zM40 34h1v1h-1zM0 35h1v1h-1zM6 35h1v1h-1zM8 35h1v1h-1zM13 35h1v1h-1zM16 35h1v1h-1zM21 35h1v1h-1zM24 35h1v1h-1zM27 35h2v1h-2zM32 35h1v1h-1zM36 35h1v1h-1zM38 35h1v1h-1zM0 36h1v1h-1zM2 36h3v1h-3zM6 36h1v1h-1zM8 36h2v1h-2zM11 36h3v1h-3zM15 36h2v1h-2zM19 36h4v1h-4zM24 36h1v1h-1zM26 36h1v1h-1zM28 36h1v1h-1zM30 36h1v1h-1zM32 36h5v1h-5zM38 36h3v1h-3zM0 37h1v1h-1zM2 37h3v1h-3zM6 37h1v1h-1zM12 37h3v1h-3zM16 37h1v1h-1zM18 37h1v1h-1zM20 37h2v1h-2zM24 37h6v1h-6zM31 37h4v1h-4zM36 37h5v1h-5zM0 38h1v1h-1zM2 38h3v1h-3zM6 38h1v1h-1zM9 38h2v1h-2zM16 38h1v1h-1zM18 38h2v1h-2zM23 38h1v1h-1zM26 38h1v1h-1zM35 38h1v1h-1zM37 38h1v1h-1zM39 38h2v1h-2zM0 39h1v1h-1zM6 39h1v1h-1zM8 39h1v1h-1zM11 39h2v1h-2zM16 39h3v1h-3zM25 39h1v1h-1zM27 39h1v1h-1zM30 39h2v1h-2zM34 39h1v1h-1zM36 39h2v1h-2zM39 39h1v1h-1zM0 40h7v1h-7zM8 40h3v1h-3zM17 40h1v1h-1zM19 40h1v1h-1zM22 40h1v1h-1zM24 40h2v1h-2zM30 40h1v1h-1zM34 40h1v1h-1z" fill="#000"/></g><circle cx="48" cy="48" r="13.5" fill="#fff"/><svg x="38.7" y="38.7" width="18.6" height="18.6" viewBox="0 0 100 100"><circle cx="50" cy="50" r="50" fill="#0b7dff"/><path d="M53,33 C62,26 80,24 87,33 C89,37 89,40 88,43 C93,37 94,28 88,20 C85,15 81,12 77,9 L101,5 L101,47 C96,58 86,64 76,64 C69,64 62,63 57,61 C52,54 51,44 53,33 Z" fill="#fff"/><path d="M8.5,75 C18,58 35,40 53,32 M53,32 C46,45 45,60 50,76 C52,84 55,92 58,99 M57,61 C62,72 74,80 87,83" stroke="#fff" stroke-width="3.2" fill="none"/><path d="M35,19.5 C48,12 62,9 77,9.5 C62,11.5 48,14.5 35,19.5 Z" fill="#fff" stroke="#fff" stroke-width=".8"/></svg></svg></div>
  <div class="qrl" style="left:836px;top:175px">微信公众号</div>
  <div class="qrl" style="left:997px;top:185px">小程序</div>
  <div class="qrl" style="left:1158px;top:175px">扫码下载APP</div>
</div>

<div id="mask"></div>

<div id="md">
  <div id="mh">
    <svg class="ic" width="19.6" height="19.8" viewBox="0 0 100 100" preserveAspectRatio="none"><circle cx="50" cy="50" r="50" fill="#1a8cff"/><path d="M53,33 C62,26 80,24 87,33 C89,37 89,40 88,43 C93,37 94,28 88,20 C85,15 81,12 77,9 L101,5 L101,47 C96,58 86,64 76,64 C69,64 62,63 57,61 C52,54 51,44 53,33 Z" fill="#fff"/><path d="M8.5,75 C18,58 35,40 53,32 M53,32 C46,45 45,60 50,76 C52,84 55,92 58,99 M57,61 C62,72 74,80 87,83" stroke="#fff" stroke-width="5" fill="none"/><path d="M35,19.5 C48,12 62,9 77,9.5 C62,11.5 48,14.5 35,19.5 Z" fill="#fff" stroke="#fff" stroke-width=".8"/></svg>
    <div class="lt">天眼查</div>
    <div class="sp"></div>
    <div class="tt">开庭公告详情</div>
    <svg class="x" width="14" height="14" viewBox="0 0 14 14"><path d="M.4 .4 L13.6 13.6 M13.6 .4 L.4 13.6" stroke="#333" stroke-width="1.15" fill="none"/></svg>
  </div>
  <table id="tb">
    <colgroup><col style="width:173px"><col style="width:261px"><col style="width:173.5px"><col style="width:259.5px"></colgroup>
    <tr><td class="k">案号</td><td class="v">（2026）浙0182民初1107号</td><td class="k">案由</td><td class="v">肖像权纠纷</td></tr>
    <tr><td class="k">原告</td><td class="v" colspan="3">王某</td></tr>
    <tr><td class="k">被告</td><td class="v" colspan="3"><a>杭州友科服饰有限公司</a></td></tr>
    <tr><td class="k">法院</td><td class="v">建德市人民法院</td><td class="k">法庭</td><td class="v">乾潭法庭1号法庭</td></tr>
    <tr><td class="k">承办部门</td><td class="v">-</td><td class="k">审判长/主审人</td><td class="v">章志英</td></tr>
    <tr><td class="k">开庭日期</td><td class="v">2026-03-19 13:45</td><td class="k">排期日期</td><td class="v">-</td></tr>
  </table>
</div>
</div>
</body>
</html>
